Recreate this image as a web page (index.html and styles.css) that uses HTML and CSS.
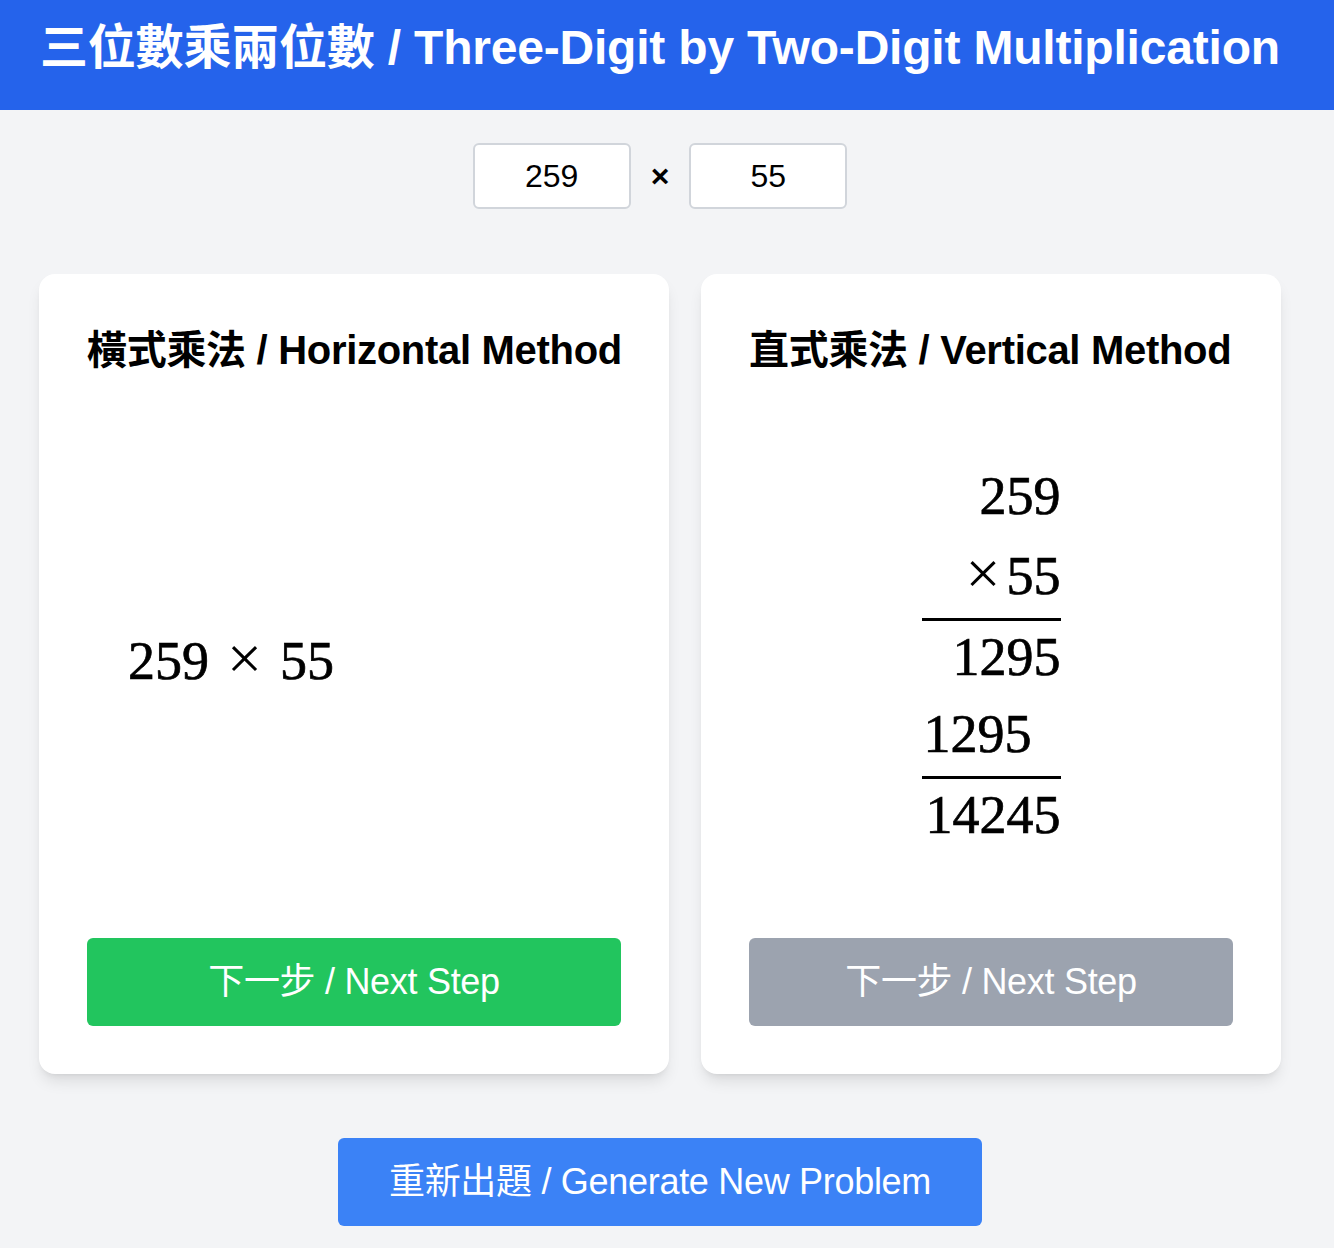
FILE: index.html
```html
<!DOCTYPE html>
<html lang="zh-Hant">
<head>
<meta charset="utf-8">
<title>三位數乘兩位數</title>
<link rel="stylesheet" href="styles.css">
</head>
<body>
<header class="topbar">
  <h1 class="topbar-title">三位數乘兩位數 / Three-Digit by Two-Digit Multiplication</h1>
</header>
<main class="page">
  <div class="controls">
    <input class="num-input" type="text" value="259">
    <span class="op">×</span>
    <input class="num-input" type="text" value="55">
  </div>
  <div class="cards">
    <section class="card card-wide">
      <h2 class="card-title">橫式乘法 / Horizontal Method</h2>
      <div class="math-area math-left">
        <div class="hmath"><span>259</span><span class="hmath-op">×</span><span>55</span></div>
      </div>
      <button class="btn btn-green" type="button">下一步 / Next Step</button>
    </section>
    <section class="card card-narrow">
      <h2 class="card-title">直式乘法 / Vertical Method</h2>
      <div class="math-area math-center">
        <div class="vmath">
          <div class="vrow">259</div>
          <div class="vrow vrule"><span class="vmath-op">×</span>55</div>
          <div class="vrow vrow-after">1295</div>
          <div class="vrow vrule vshift">1295</div>
          <div class="vrow vrow-after">14245</div>
        </div>
      </div>
      <button class="btn btn-gray" type="button">下一步 / Next Step</button>
    </section>
  </div>
  <div class="footer-row">
    <button class="btn btn-blue" type="button">重新出題 / Generate New Problem</button>
  </div>
</main>
</body>
</html>
```
FILE: styles.css
```css
* { box-sizing: border-box; }
html, body { margin: 0; padding: 0; }
body {
  background: #f3f4f6;
  font-family: "Liberation Sans", "Noto Sans CJK TC", sans-serif;
  color: #000;
}
.topbar {
  background: #2563eb;
  padding: 24px 40px 38px;
}
.topbar-title {
  margin: 0;
  color: #fff;
  font-size: 48px;
  line-height: 48px;
  font-weight: 700;
  letter-spacing: -0.2px;
  white-space: nowrap;
}
.page {
  width: 1242px;
  margin-left: 39px;
  display: flex;
  flex-direction: column;
  align-items: center;
}
.controls {
  margin-top: 33px;
  display: flex;
  align-items: center;
  gap: 20px;
}
.num-input {
  width: 158px;
  height: 66px;
  border: 2px solid #d1d5db;
  border-radius: 6px;
  background: #fff;
  font-family: "Liberation Sans", sans-serif;
  font-size: 32px;
  color: #000;
  text-align: center;
  padding: 0;
  outline: none;
}
.op {
  font-size: 32px;
  font-weight: 700;
  line-height: 1;
}
.cards {
  margin-top: 65px;
  align-self: stretch;
  display: flex;
  gap: 32px;
}
.card {
  height: 800px;
  background: #fff;
  border-radius: 16px;
  box-shadow: 0 10px 15px -3px rgba(0,0,0,0.1), 0 4px 6px -4px rgba(0,0,0,0.1);
  padding: 48px;
  display: flex;
  flex-direction: column;
}
.card-wide { width: 630px; }
.card-narrow { width: 580px; }
.card-title {
  margin: 0;
  font-size: 40px;
  line-height: 56px;
  font-weight: 700;
  letter-spacing: -0.3px;
  white-space: nowrap;
}
.math-area {
  flex: 1;
  display: flex;
  align-items: center;
}
.math-left { padding-left: 41px; }
.math-center { justify-content: center; padding-bottom: 6px; }
.hmath {
  font-family: "Liberation Serif", serif;
  font-size: 54px;
  line-height: 1;
  -webkit-text-stroke: 0.7px #000;
  display: flex;
  align-items: baseline;
}
.hmath-op {
  font-size: 62px;
  margin: 0 18px;
  -webkit-text-stroke: 0;
}
.vmath {
  width: 139px;
  font-family: "Liberation Serif", serif;
  font-size: 54px;
  text-align: right;
  -webkit-text-stroke: 0.7px #000;
  display: flex;
  flex-direction: column;
}
.vrow {
  line-height: 60px;
  height: 60px;
  white-space: nowrap;
  margin-top: 17px;
}
.vrow:first-child { margin-top: 0; }
.vrule {
  height: auto;
  padding-bottom: 12px;
  border-bottom: 3px solid #000;
}
.vrow-after { margin-top: 6px; }
.vshift { padding-right: 29px; }
.vmath-op {
  font-size: 62px;
  margin-right: 6px;
  -webkit-text-stroke: 0;
}
.btn {
  border: 0;
  border-radius: 6px;
  color: #fff;
  font-family: "Liberation Sans", "Noto Sans CJK TC", sans-serif;
  font-size: 36px;
  line-height: 40px;
  padding: 24px 0;
  white-space: nowrap;
  letter-spacing: -0.3px;
  cursor: pointer;
}
.btn-green { background: #22c55e; width: 100%; }
.btn-gray { background: #9ca3af; width: 100%; }
.btn-blue { background: #3b82f6; width: 644px; }
.footer-row {
  margin-top: 64px;
  display: flex;
  justify-content: center;
}
```
